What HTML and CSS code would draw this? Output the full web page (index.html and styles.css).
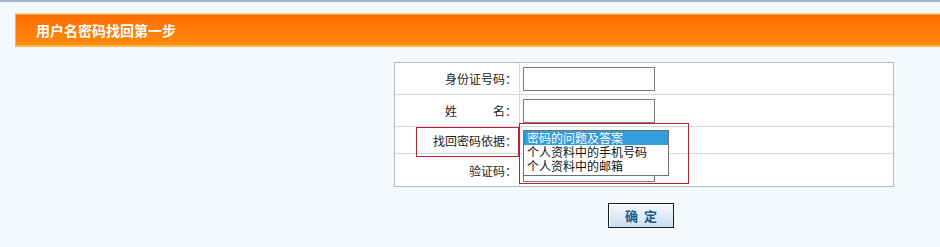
FILE: index.html
```html
<!DOCTYPE html>
<html lang="zh-CN">
<head>
<meta charset="utf-8">
<title>用户名密码找回第一步</title>
<link rel="stylesheet" href="styles.css">
</head>
<body>
<div class="topline"></div>
<div class="titlebar"><h1 class="title">用户名密码找回第一步</h1></div>
<div class="content">
  <div class="form">
    <div class="label">身份证号码：</div>
    <div class="field"><input class="text" type="text"></div>
    <div class="label">姓　　　名：</div>
    <div class="field"><input class="text" type="text"></div>
    <div class="label short">找回密码依据：</div>
    <div class="field short">
      <div class="select"></div>
      <div class="listbox">
        <div class="option selected">密码的问题及答案</div>
        <div class="option">个人资料中的手机号码</div>
        <div class="option">个人资料中的邮箱</div>
      </div>
    </div>
    <div class="label last">验证码：</div>
    <div class="field last"><input class="text" type="text"></div>
    <div class="mark mark-label"></div>
    <div class="mark mark-field"></div>
  </div>
  <div class="actions"><button class="btn" type="button">确&nbsp;&nbsp;定</button></div>
</div>
</body>
</html>
```
FILE: styles.css
```css
html, body {
  margin: 0;
  padding: 0;
}
body {
  background: #f5f9fc;
  font-family: "Noto Sans CJK SC", "Liberation Sans", sans-serif;
  font-size: 12px;
  color: #222;
  width: 940px;
  height: 247px;
  overflow: hidden;
}
.topline {
  height: 2px;
  background: #a3b6cd;
}
.titlebar {
  margin: 11px 0 0 15px;
  height: 31px;
  border-top: 1px solid #fde39a;
  border-bottom: 2px solid #ffb54a;
  border-left: 1px solid #ffb259;
  background: linear-gradient(#ff6d00, #ff8a0e);
  box-shadow: inset 0 1px 0 #ff9a3a;
  display: flex;
  align-items: center;
}
.title {
  margin: 0 0 0 20px;
  font-size: 14px;
  font-weight: bold;
  color: #fff;
  line-height: 16px;
}
.content {
  padding: 15px 0 0 394px;
}
.form {
  position: relative;
  width: 498px;
  border: 1px solid #aabbcd;
  background: #fff;
  display: grid;
  grid-template-columns: 125px 1fr;
  grid-template-rows: 32px 32px 27px 32px;
}
.label, .field {
  border-bottom: 1px solid #d4dbe3;
  display: flex;
  align-items: center;
}
.label {
  border-right: 1px solid #d4dbe3;
  justify-content: flex-end;
  padding-right: 2px;
}
.field {
  padding-left: 3px;
  position: relative;
}
.label.last, .field.last {
  border-bottom: none;
}
.text {
  box-sizing: border-box;
  width: 132px;
  height: 24px;
  margin: 0;
  border: 1px solid #7b7b7b;
  background: #fff;
  padding: 0 2px;
}
.select {
  width: 132px;
  height: 20px;
}
.listbox {
  position: absolute;
  z-index: 3;
  left: 3px;
  top: 3px;
  box-sizing: border-box;
  width: 146px;
  height: 46px;
  border: 1px solid #6f6f6f;
  background: #fff;
  padding-bottom: 2px;
}
.option {
  height: 14px;
  line-height: 14px;
  padding-left: 3px;
  white-space: nowrap;
  color: #111;
}
.option.selected {
  background: #339ddb;
  color: #fff;
}
.mark {
  position: absolute;
  z-index: 4;
  box-sizing: border-box;
  border: 1px solid #c0222c;
  pointer-events: none;
}
.mark-label {
  left: 21px;
  top: 64px;
  width: 103px;
  height: 30px;
}
.mark-field {
  left: 124px;
  top: 60px;
  width: 170px;
  height: 61px;
}
.actions {
  display: flex;
  padding: 16px 0 0 214px;
}
.btn {
  box-sizing: border-box;
  width: 66px;
  height: 25px;
  margin: 0;
  padding: 0;
  border: 1px solid #1c1c1c;
  background: linear-gradient(#f6f9fd, #cbdef2);
  box-shadow: inset 1px 1px 0 #ffffff;
  font-family: "Noto Sans CJK SC", sans-serif;
  font-size: 13px;
  font-weight: bold;
  color: #1d5b8a;
  line-height: 21px;
}
```
